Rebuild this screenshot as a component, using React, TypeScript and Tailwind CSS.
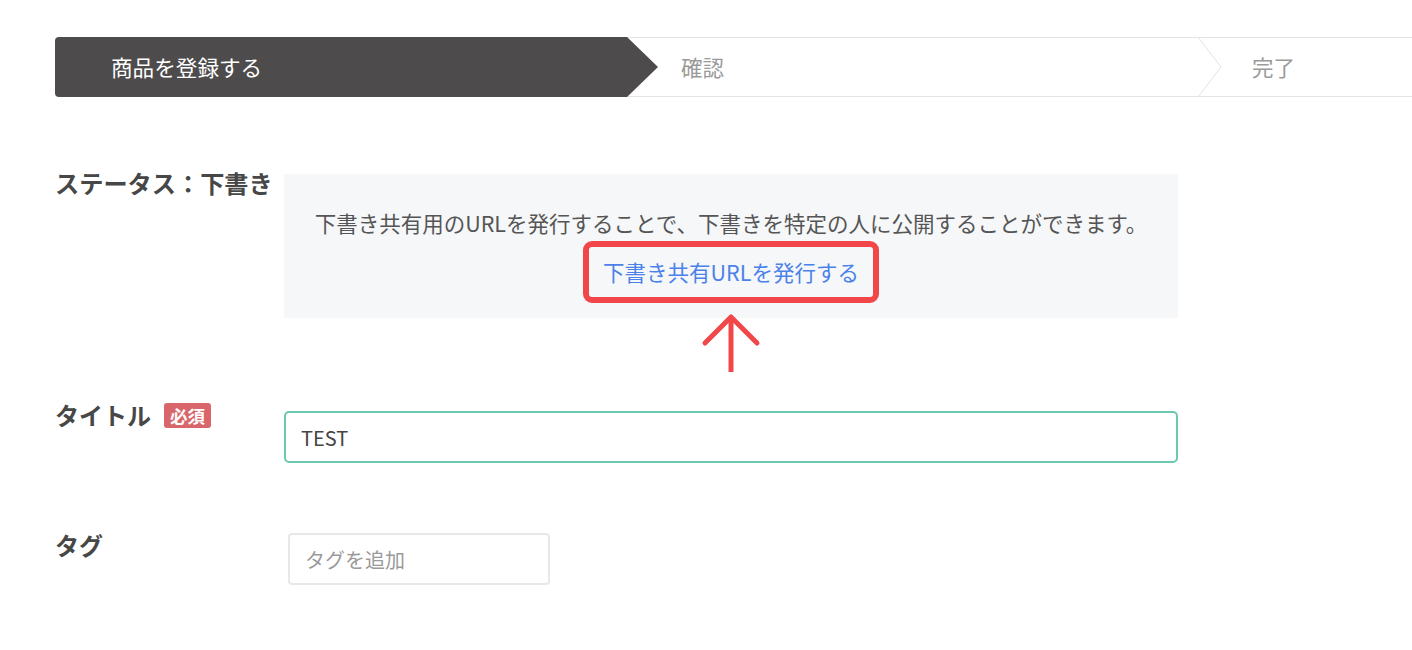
import React from 'react';

const font = { fontFamily: '"Noto Sans CJK JP", "Noto Sans", sans-serif' };

const Stepper = () => (
  <div className="flex h-[60px] w-full">
    <div className="relative flex w-[572px] items-center rounded-l-[4px] bg-[#4d4b4b] pl-[56px] text-[21.6px] text-white">
      商品を登録する
      <svg className="absolute top-0 right-[-31px] z-10" width="31" height="60" viewBox="0 0 31 60">
        <polygon points="0,0 31,30 0,60" fill="#4d4b4b" />
      </svg>
    </div>
    <div className="relative flex w-[572px] items-center border-y border-[#e3e3e3] pl-[54px] text-[21.5px] text-[#9a9a9a]">
      確認
      <svg className="absolute top-[-1px] right-[-23px] z-10" width="24" height="60" viewBox="0 0 24 60">
        <polygon points="0,0 23,30 0,60" fill="#ffffff" />
        <polyline points="0,0 23,30 0,60" fill="none" stroke="#e3e3e3" strokeWidth="1" />
      </svg>
    </div>
    <div className="flex flex-1 items-center border-y border-[#e3e3e3] pl-[53px] text-[21.5px] text-[#9a9a9a]">
      完了
    </div>
  </div>
);

export default function App() {
  return (
    <div className="min-h-[650px] bg-white pt-[37px] pl-[55px] text-[#484848]" style={font}>
      <Stepper />

      <div className="mt-[77px] flex items-start">
        <div className="-mt-[9px] w-[229px] text-[24.2px] leading-[36px] font-bold text-[#474747]">ステータス：下書き</div>
        <div className="relative flex w-[894px] flex-col items-center bg-[#f6f7f9] pt-[33px] pb-[15px]">
          <p className="text-[21.5px] leading-[32px] text-[#555555]">
            下書き共有用のURLを発行することで、下書きを特定の人に公開することができます。
          </p>
          <a className="mt-[2px] rounded-[9px] border-[6px] border-[#f2474a] px-[14px] py-[9px] text-[21.5px] leading-[32px] text-[#4b82ea]">
            下書き共有URLを発行する
          </a>
          <svg className="absolute top-[138px] left-[416px]" width="62" height="62" viewBox="0 0 62 62">
            <path d="M31 6 V60" stroke="#f2474a" strokeWidth="5" fill="none" />
            <path d="M5 31 L31 5 L57 31" stroke="#f2474a" strokeWidth="5" strokeLinecap="round" strokeLinejoin="round" fill="none" />
          </svg>
        </div>
      </div>

      <div className="mt-[93px] flex items-start">
        <div className="-mt-[14px] flex w-[229px] items-center gap-[13px]">
          <span className="text-[24px] leading-[36px] font-bold text-[#474747]">タイトル</span>
          <span className="rounded-[3px] bg-[#d9666a] px-[6px] text-[17.5px] leading-[25px] font-bold text-white">必須</span>
        </div>
        <div className="flex h-[52px] w-[894px] items-center rounded-[5px] border-2 border-[#6cc9b0] pt-[2px] pl-[15px] text-[20px] text-[#444444]">
          TEST
        </div>
      </div>

      <div className="mt-[70px] flex items-start">
        <div className="-mt-[6px] w-[233px] text-[24px] leading-[36px] font-bold text-[#474747]">タグ</div>
        <div className="flex h-[52px] w-[262px] items-center rounded-[4px] border-2 border-[#e8e8e8] pt-[2px] pl-[15px] text-[20px] text-[#9a9a9a]">
          タグを追加
        </div>
      </div>
    </div>
  );
}
